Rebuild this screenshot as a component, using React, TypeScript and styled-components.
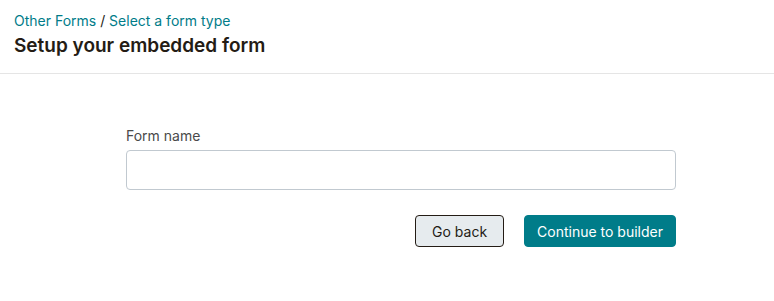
import React from "react";
import styled, { createGlobalStyle } from "styled-components";

const Global = createGlobalStyle`
  html, body { margin: 0; padding: 0; background: #fff; }
  body { font-family: "Inter", "Noto Sans", sans-serif; color: #241c15; }
  * { box-sizing: border-box; }
`;

const Header = styled.header`
  padding: 12px 14px 0 14px;
  height: 74px;
  border-bottom: 1px solid #e5e5e5;
`;

const Crumbs = styled.nav`
  font-size: 14px;
  line-height: 18px;
  color: #241c15;
`;

const Crumb = styled.a`
  color: #007c89;
  text-decoration: none;
`;

const Title = styled.h1`
  margin: 4px 0 0 0;
  font-size: 19px;
  line-height: 24px;
  font-weight: 600;
  color: #241c15;
`;

const Main = styled.main`
  padding: 53px 0 0 126px;
`;

const Form = styled.form`
  width: 550px;
  display: flex;
  flex-direction: column;
`;

const Label = styled.label`
  font-size: 14px;
  line-height: 18px;
  color: #4a4a4a;
  margin-bottom: 5px;
`;

const Input = styled.input`
  height: 40px;
  border: 1px solid #c1c9d0;
  border-radius: 4px;
  padding: 0 12px;
  font: inherit;
  outline: none;
`;

const Actions = styled.div`
  display: flex;
  justify-content: flex-end;
  gap: 20px;
  margin-top: 25px;
`;

const Button = styled.button<{ $primary?: boolean }>`
  height: 32px;
  padding: 0 ${(p) => (p.$primary ? "12px" : "16px")};
  border-radius: 4px;
  font-family: inherit;
  font-size: 14px;
  cursor: pointer;
  border: 1px solid ${(p) => (p.$primary ? "#007c89" : "#241c15")};
  background: ${(p) => (p.$primary ? "#007c89" : "#e6ebee")};
  color: ${(p) => (p.$primary ? "#fff" : "#241c15")};
`;

export default function App() {
  return (
    <>
      <Global />
      <Header>
        <Crumbs>
          <Crumb href="#">Other Forms</Crumb> / <Crumb href="#">Select a form type</Crumb>
        </Crumbs>
        <Title>Setup your embedded form</Title>
      </Header>
      <Main>
        <Form onSubmit={(e) => e.preventDefault()}>
          <Label htmlFor="fname">Form name</Label>
          <Input id="fname" type="text" />
          <Actions>
            <Button type="button">Go back</Button>
            <Button type="submit" $primary>Continue to builder</Button>
          </Actions>
        </Form>
      </Main>
    </>
  );
}
